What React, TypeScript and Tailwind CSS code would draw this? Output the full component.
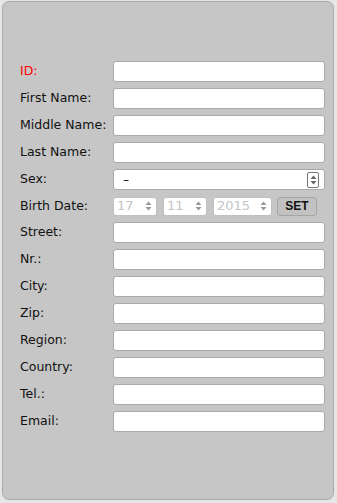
import React from "react";

const font = { fontFamily: '"Lucida Grande", "DejaVu Sans", sans-serif' };

function Updown({ color = "#888" }: { color?: string }) {
  return (
    <svg width="7" height="10" viewBox="0 0 7 10">
      <path d="M3.5 0.5 L6.5 4 L0.5 4 Z" fill={color} />
      <path d="M3.5 9.5 L6.5 6 L0.5 6 Z" fill={color} />
    </svg>
  );
}

function Field({ label, red }: { label: string; red?: boolean }) {
  return (
    <div className="flex items-center h-[21px]">
      <div className={`w-[93px] text-[12.5px] ${red ? "text-[#ff0000]" : "text-[#111]"}`}>{label}</div>
      <div className="w-[212px] h-[21px] bg-white border border-[#aaaaaa] rounded-[3px]" />
    </div>
  );
}

function Small({ v, w }: { v: string; w: string }) {
  return (
    <div className={`${w} h-[19px] bg-white border border-[#c0c0c0] rounded-[3px] flex items-center justify-between pl-[3px] pr-[4px] text-[13px] text-[#c4c4c4]`}>
      <span>{v}</span>
      <Updown color="#9a9a9a" />
    </div>
  );
}

export default function App() {
  const rows1 = ["First Name:", "Middle Name:", "Last Name:"];
  const rows2 = ["Street:", "Nr.:", "City:", "Zip:", "Region:", "Country:", "Tel.:", "Email:"];
  return (
    <div className="w-[337px] h-[503px] bg-[#e6e6e6] pt-[1px] pl-[2px]" style={font}>
      <div className="w-[332px] h-[499px] bg-[#c6c6c6] border border-[#a9a9a9] rounded-[7px] pt-[59px] pl-[17px] flex flex-col gap-[6px]">
        <Field label="ID:" red />
        {rows1.map((r) => (
          <Field key={r} label={r} />
        ))}
        <div className="flex items-center h-[21px]">
          <div className="w-[93px] text-[12.5px] text-[#111]">Sex:</div>
          <div className="w-[212px] h-[21px] bg-white border border-[#aaaaaa] rounded-[3px] flex items-center justify-between pl-[9px] pr-[5px] text-[12px] text-[#111]">
            <span>–</span>
            <div className="w-[12px] h-[16px] border border-[#777] rounded-[2px] flex items-center justify-center">
              <Updown color="#666" />
            </div>
          </div>
        </div>
        <div className="flex items-center h-[20px]">
          <div className="w-[93px] text-[12.5px] text-[#111]">Birth Date:</div>
          <div className="flex items-center gap-[6px]">
            <Small v="17" w="w-[44px]" />
            <Small v="11" w="w-[44px]" />
            <Small v="2015" w="w-[59px]" />
            <div className="w-[40px] h-[19px] -ml-[1px] bg-[#c2c2c2] border border-[#a5a5a5] rounded-[3px] flex items-center justify-center text-[12px] font-bold text-[#111]" style={{ fontFamily: '"Liberation Sans", sans-serif' }}>
              SET
            </div>
          </div>
        </div>
        {rows2.map((r) => (
          <Field key={r} label={r} />
        ))}
      </div>
    </div>
  );
}
